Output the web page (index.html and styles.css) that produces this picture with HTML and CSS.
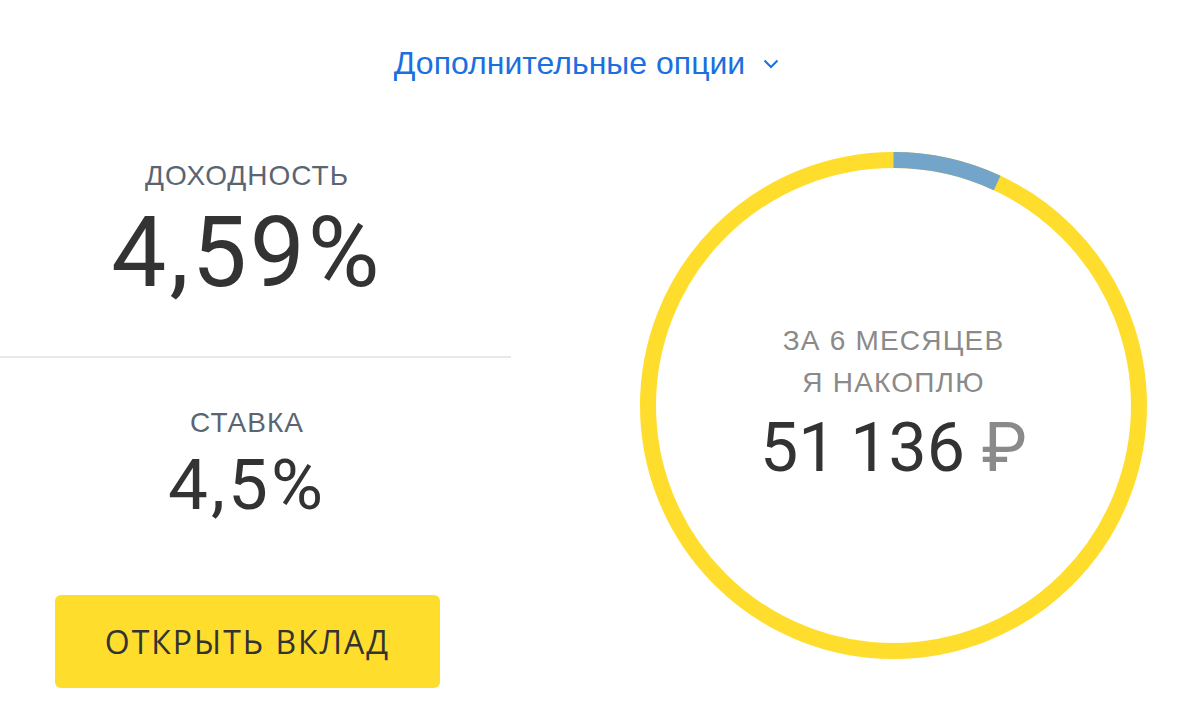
FILE: index.html
```html
<!DOCTYPE html>
<html lang="ru">
<head>
<meta charset="utf-8">
<link rel="stylesheet" href="styles.css">
</head>
<body>
<div class="header">
  <a class="options-link" href="#">Дополнительные опции
    <svg class="chevron" width="16" height="10" viewBox="0 0 16 10"><path d="M1.5 1.5 L8 8 L14.5 1.5" fill="none" stroke="#1b6fe0" stroke-width="2"/></svg>
  </a>
</div>
<div class="main">
  <div class="left">
    <div class="stat">
      <div class="label">Доходность</div>
      <div class="value big">4,59%</div>
    </div>
    <div class="divider"></div>
    <div class="stat stat-rate">
      <div class="label">Ставка</div>
      <div class="value mid">4,5%</div>
    </div>
    <button class="open-btn">Открыть вклад</button>
  </div>
  <div class="right">
    <div class="ring">
      <svg class="ring-svg" width="507" height="507" viewBox="0 0 507 507">
        <circle cx="253.5" cy="253.5" r="245.5" fill="none" stroke="#ffdd2d" stroke-width="16"/>
        <circle cx="253.5" cy="253.5" r="245.5" fill="none" stroke="#73a4c9" stroke-width="16" stroke-dasharray="107 2000" transform="rotate(-90 253.5 253.5)"/>
      </svg>
      <div class="ring-text">
        <div class="ring-label">За 6 месяцев</div>
        <div class="ring-label">я накоплю</div>
        <div class="ring-sum">51&#8201;136 <span class="rub">₽</span></div>
      </div>
    </div>
  </div>
</div>
</body>
</html>
```
FILE: styles.css
```css
html, body {
  margin: 0;
  padding: 0;
  background: #ffffff;
}
body {
  font-family: "Liberation Sans", Arial, sans-serif;
  color: #333333;
  width: 1200px;
  height: 717px;
  overflow: hidden;
}
.header {
  display: flex;
  justify-content: center;
  padding-top: 43px;
  padding-right: 27px;
  height: 40px;
}
.options-link {
  display: flex;
  align-items: center;
  gap: 18px;
  font-size: 32px;
  line-height: 40px;
  color: #1b6fe0;
  text-decoration: none;
}
.chevron {
  margin-top: 2px;
}
.main {
  display: flex;
  margin-top: 69px;
}
.left {
  width: 511px;
  display: flex;
  flex-direction: column;
  align-items: center;
  padding-top: 8px;
}
.stat {
  width: 494px;
  margin-right: 17px;
  display: flex;
  flex-direction: column;
  align-items: center;
}
.label {
  font-size: 28px;
  line-height: 32px;
  letter-spacing: 1px;
  text-transform: uppercase;
  color: #5b6572;
}
.value {
  font-family: Roboto, "Liberation Sans", sans-serif;
  font-weight: 400;
  color: #333333;
  letter-spacing: 3px;
}
.big {
  font-size: 98px;
  line-height: 98px;
  margin-top: 12px;
}
.mid {
  font-size: 71px;
  line-height: 71px;
  margin-top: 10px;
}
.divider {
  width: 511px;
  height: 2px;
  background: #e8e8e8;
  margin-top: 54px;
}
.stat-rate {
  margin-top: 49px;
}
.open-btn {
  margin-top: 75px;
  margin-right: 16px;
  width: 385px;
  height: 93px;
  border: none;
  border-radius: 6px;
  background: #ffdd2d;
  color: #333333;
  font-family: "Open Sans", "Noto Sans", sans-serif;
  font-size: 32px;
  letter-spacing: 2px;
  text-transform: uppercase;
  padding: 0;
}
.right {
  padding-left: 129px;
}
.ring {
  position: relative;
  width: 507px;
  height: 507px;
  display: flex;
  align-items: center;
  justify-content: center;
}
.ring-svg {
  position: absolute;
  left: 0;
  top: 0;
}
.ring-text {
  display: flex;
  flex-direction: column;
  align-items: center;
  padding-bottom: 9px;
}
.ring-label {
  font-size: 28px;
  line-height: 42px;
  letter-spacing: 1.2px;
  text-transform: uppercase;
  color: #8a8a8a;
}
.ring-sum {
  font-family: Roboto, "Liberation Sans", sans-serif;
  font-weight: 400;
  font-size: 68px;
  line-height: 68px;
  margin-top: 10px;
  color: #333333;
  letter-spacing: 0;
}
.rub {
  color: #8a8a8a;
}
```
